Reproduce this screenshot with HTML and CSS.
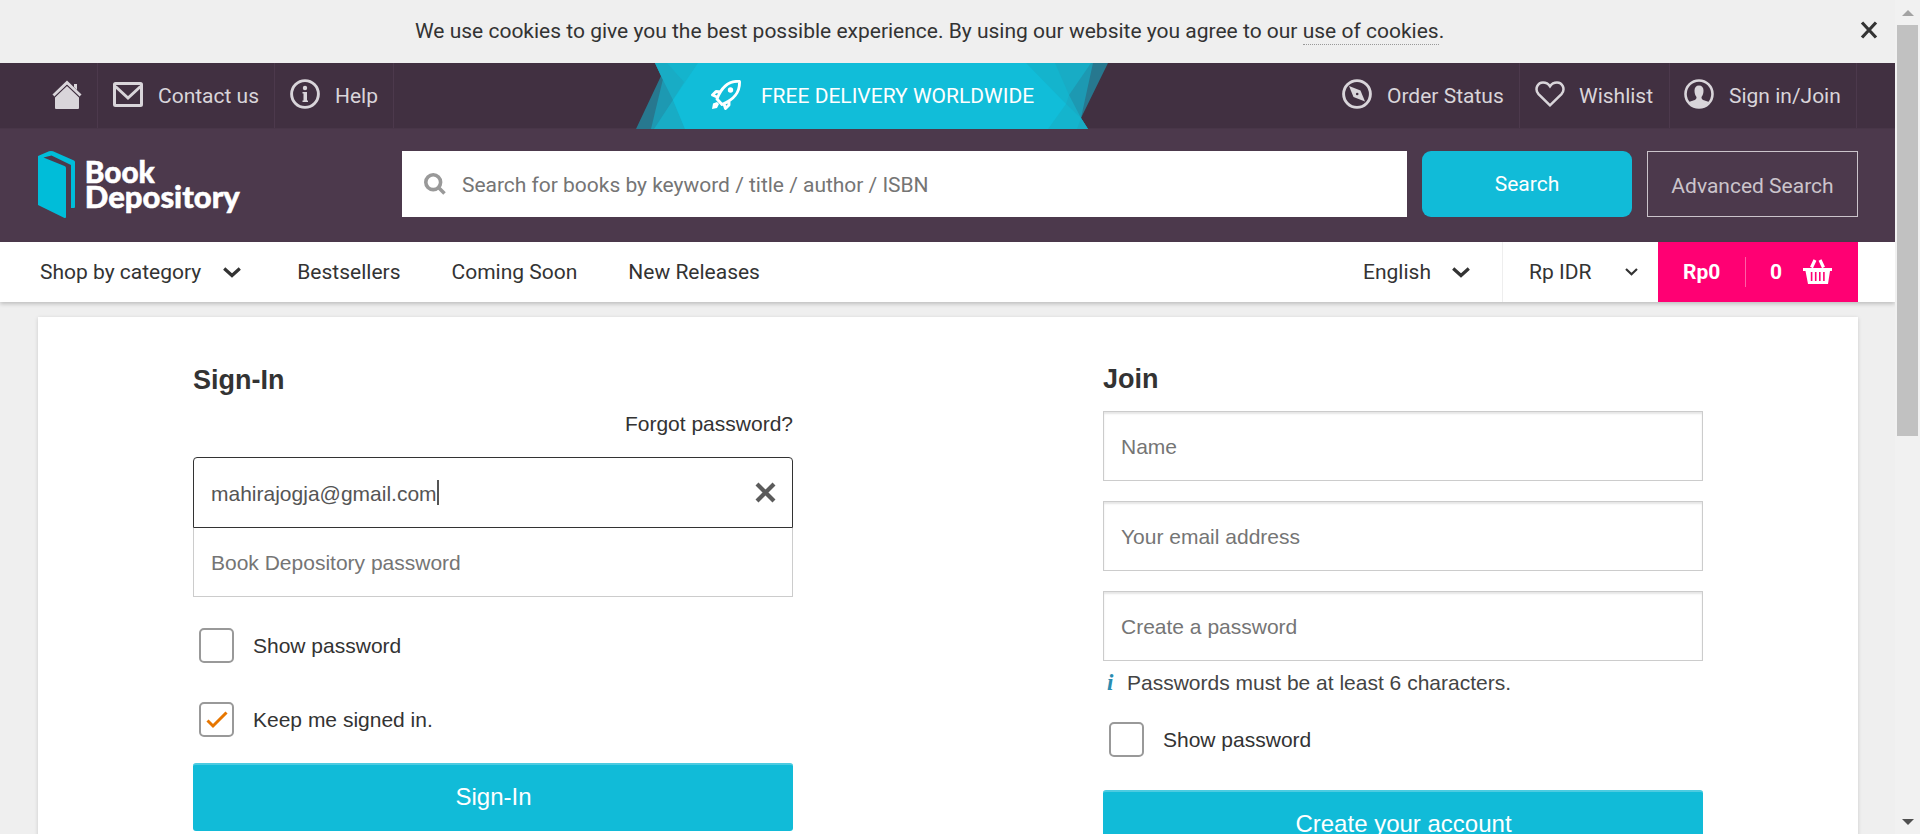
FILE: index.html
```
<!DOCTYPE html>
<html lang="en">
<head>
<meta charset="utf-8">
<title>Book Depository - Sign in</title>
<link rel="stylesheet" href="styles.css">
</head>
<body>
<div class="viewport">
<div class="page">
  <div class="cookie-bar">
    <p class="cookie-text">We use cookies to give you the best possible experience. By using our website you agree to our <a class="cookie-link">use of cookies</a>.</p>
    <svg class="cookie-close" width="18" height="18" viewBox="0 0 18 18"><path d="M2 1.500L16 16.500M16 1.500L2 16.500" stroke="#333" stroke-width="3.200"/></svg>
  </div>
  <div class="top-bar">
    <nav class="top-left">
      <a class="top-item home"><svg width="30" height="29" viewBox="0 0 30 29"><path d="M1.500 15.500L15 2.500l13.500 13" fill="none" stroke="#d9d5da" stroke-width="3"/><path d="M22 4h3v6l-3-3zM3 17.500L15 6l12 11.500V28q0 1-1 1H4q-1 0-1-1z" fill="#d9d5da"/><path d="M3 16.600L15 5.200l12 11.400" fill="none" stroke="#413041" stroke-width=".8"/></svg></a>
      <a class="top-item contact"><svg width="30" height="25" viewBox="0 0 30 25"><rect x="1.500" y="1.500" width="27" height="22" rx="1" fill="none" stroke="#d9d5da" stroke-width="3"/><path d="M2.500 4.500L15 16 27.500 4.500" fill="none" stroke="#d9d5da" stroke-width="3"/></svg><span>Contact us</span></a>
      <a class="top-item help"><svg width="30" height="30" viewBox="0 0 30 30"><circle cx="15" cy="15" r="13.400" fill="none" stroke="#d9d5da" stroke-width="2.900"/><circle cx="15" cy="9" r="2.200" fill="#d9d5da"/><path d="M12.500 13H17v8.500h1V23h-5.500v-1.500h1v-7h-1z" fill="#d9d5da"/></svg><span>Help</span></a>
    </nav>
    <div class="banner">
      <svg class="banner-shape" width="474" height="66" viewBox="0 0 474 66"><path d="M19 0H472L445 55l7 11H0L25 13z" fill="#27788f"/><path d="M19 0H457L445 55 452 66H15L27 16z" fill="#1d99b2"/><path d="M19 0H455L433 32 445 55 452 66H18L37 37 25 13z" fill="#18acc5"/><path d="M31 0H419L433 32 430 41 445 55 441 66H49L37 37 48 19z" fill="#14b4cd"/><path d="M62 0H390L430 41 412 66H49L37 37z" fill="#11bdd9"/></svg>
      <div class="banner-content"><svg width="30" height="30" viewBox="0 0 30 30"><path d="M28.500 1.500C18 .5 11 6 6 19l5 5.500C24 19 29 12 28.500 1.500zM10 12L5 11.500 1.500 15 6 17M18 20v5l-3.500 3.500L13 24" fill="none" stroke="#fff" stroke-width="2.900" stroke-linejoin="round"/><circle cx="19.500" cy="10" r="2.700" fill="#fff"/><path d="M1 29l1-5.500 4-1.500 2 2-2 4z" fill="#fff"/></svg><span>FREE DELIVERY WORLDWIDE</span></div>
    </div>
    <nav class="top-right">
      <a class="top-item order"><svg width="30" height="30" viewBox="0 0 30 30"><circle cx="15" cy="15" r="13.400" fill="none" stroke="#d9d5da" stroke-width="2.900"/><path d="M7 7L18.500 11.500 23 22.500 11.500 18z" fill="#d9d5da"/><circle cx="15.200" cy="15" r="1.300" fill="#413041"/></svg><span>Order Status</span></a>
      <a class="top-item wish"><svg width="30" height="26" viewBox="0 0 30 26"><path d="M15 24.300L3.300 12.800C-.8 7.500 3 1.500 8 1.500c3 0 5.500 1.500 7 3.800 1.500-2.300 4-3.800 7-3.800 5 0 8.800 6 4.700 11.300z" fill="none" stroke="#d9d5da" stroke-width="2.500"/></svg><span>Wishlist</span></a>
      <a class="top-item signin"><svg width="30" height="30" viewBox="0 0 30 30"><circle cx="15" cy="15" r="13.500" fill="none" stroke="#d9d5da" stroke-width="2.600"/><path d="M15 6.500c3 0 4.500 2 4.500 5s-.7 5-2 6.500c0 3 1.500 3 7.500 5C22 27 19 29 15 29s-7-2-10-6c6-2 7.500-2 7.500-5-1.300-1.500-2-3.500-2-6.500s1.500-5 4.500-5z" fill="#d9d5da"/></svg><span>Sign in/Join</span></a>
    </nav>
  </div>
  <header class="header">
    <svg class="logo" width="204" height="68" viewBox="0 0 204 68"><path d="M0 5L11 .3q2-.6 4 0L36 9.500q1 .5 1 1.500v45q0 1-1 1h-3V14L13.500 4.500 5.500 6.500 26.500 15q1.500.6 1.500 2v49q0 1.500-2 .7L0 54z" fill="#00bdd9"/><text class="logo-text" x="46.800" y="32" textLength="70" lengthAdjust="spacingAndGlyphs">Book</text><text class="logo-text" x="46.800" y="56.500" textLength="155" lengthAdjust="spacingAndGlyphs">Depository</text></svg>
    <div class="search-box"><svg width="22" height="22" viewBox="0 0 22 22"><circle cx="9.200" cy="9.200" r="7.400" fill="none" stroke="#999" stroke-width="3.600"/><path d="M14 14l6.500 6.500" stroke="#999" stroke-width="3.600"/></svg><span>Search for books by keyword / title / author / ISBN</span></div>
    <button class="search-btn">Search</button>
    <a class="advanced">Advanced Search</a>
  </header>
  <div class="nav-bar">
    <nav class="nav-left">
      <a class="category">Shop by category<svg width="18" height="11" viewBox="0 0 18 11"><path d="M1.200 1.500L9 8.500l7.800-7" fill="none" stroke="#333" stroke-width="3.200"/></svg></a>
      <a>Bestsellers</a><a>Coming Soon</a><a>New Releases</a>
    </nav>
    <div class="nav-right">
      <a class="language">English<svg width="18" height="11" viewBox="0 0 18 11"><path d="M1.200 1.500L9 8.500l7.800-7" fill="none" stroke="#333" stroke-width="3.200"/></svg></a>
      <a class="currency">Rp IDR<svg width="13" height="8" viewBox="0 0 13 8"><path d="M1 1l5.500 5.200L12 1" fill="none" stroke="#333" stroke-width="2.200"/></svg></a>
      <a class="basket"><b class="total">Rp0</b><b class="count">0</b><svg width="29" height="26" viewBox="0 0 29 26"><path d="M0 9h29v3h-2L25 25H5L2.500 12H0z" fill="#fff"/><path d="M8.500 8.500L12 1M20.500 8.500L17 1" stroke="#fff" stroke-width="3.200"/><path d="M8.600 13v9M12.700 13v9M16.800 13v9M20.900 13v9" stroke="#ff0073" stroke-width="1.600"/></svg></a>
    </div>
  </div>
  <main class="card">
    <section class="form">
      <h2 class="heading">Sign-In</h2>
      <a class="forgot">Forgot password?</a>
      <div class="field email"><span class="value">mahirajogja@gmail.com</span><svg width="21" height="21" viewBox="0 0 21 21"><path d="M2 2l17 17M19 2L2 19" stroke="#5b5b5b" stroke-width="4.200"/></svg></div>
      <div class="field password">Book Depository password</div>
      <label class="check show"><span class="box"></span>Show password</label>
      <label class="check keep"><span class="box"><svg width="22" height="18" viewBox="0 0 22 18"><path d="M1.500 9.500L7 15 20.500 1.500" fill="none" stroke="#e77600" stroke-width="3"/></svg></span>Keep me signed in.</label>
      <button class="submit">Sign-In</button>
    </section>
    <section class="form join">
      <h2 class="heading">Join</h2>
      <div class="field inset">Name</div>
      <div class="field inset">Your email address</div>
      <div class="field inset">Create a password</div>
      <p class="hint"><i class="hint-icon">i</i>Passwords must be at least 6 characters.</p>
      <label class="check join-show"><span class="box"></span>Show password</label>
      <button class="submit">Create your account</button>
    </section>
  </main>
</div>
<div class="scrollbar"><span class="arrow-up"></span><span class="thumb"></span><span class="arrow-down"></span></div>
</div>
</body>
</html>
```
FILE: styles.css
```
* { box-sizing: border-box; }
body { margin: 0; background: #efefef; font-family: Roboto, sans-serif; font-size: 21px; color: #333; overflow: hidden; }
svg { display: block; flex: none; }
h2, p { margin: 0; }
button { border: 0; padding: 0; font: inherit; color: #fff; background: #11bbd8; }
.viewport { display: flex; height: 834px; overflow: hidden; white-space: nowrap; }
.page { width: 1895px; flex: none; }
.cookie-bar { height: 63px; display: flex; align-items: center; padding: 0 17px 2px 415px; justify-content: space-between; }
.cookie-close { position: relative; top: -1px; }
.cookie-link { border-bottom: 1px dotted #999; padding-bottom: 1px; }

.top-bar { height: 66px; background: #413041; border-bottom: 1px solid #483648; display: flex; color: #d9d5da; }
.top-left, .top-right { display: flex; }
.top-item { display: flex; align-items: center; border-right: 1px solid #4c394c; padding-bottom: 3px; }
.top-item span { padding-top: 3px; }
.home { width: 98px; padding-left: 52px; }
.contact { width: 177px; padding-left: 15px; gap: 15px; }
.help { width: 119px; padding-left: 15px; gap: 15px; }
.banner { width: 474px; margin: 0 auto 0 242px; position: relative; }
.banner-shape { position: absolute; left: 0; top: 0; }
.banner-content { position: relative; display: flex; align-items: center; gap: 20px; height: 66px; padding: 0 0 3px 75px; color: #fff; }
.banner-content span { padding-top: 3px; }
.top-right { margin-right: 38px; }
.order { width: 178px; gap: 15px; }
.wish { width: 150px; padding-left: 15px; gap: 14px; }
.signin { width: 187px; padding-left: 14px; gap: 15px; }

.header { height: 113px; background: #4c394c; display: flex; padding: 22px 37px 0 38px; }
.logo { margin-right: 160px; }
.logo-text { font-family: Lato, sans-serif; font-weight: 900; font-size: 30px; fill: #fff; stroke: #fff; stroke-width: .5px; }
.search-box { width: 1005px; height: 66px; background: #fff; display: flex; align-items: center; padding-left: 22px; gap: 16px; color: #757575; margin-right: 15px; }
.search-box span { padding-top: 2px; letter-spacing: -.02px; }
.search-btn { width: 210px; height: 66px; border-radius: 9px; margin-right: 15px; }
.advanced { width: 211px; height: 66px; border: 1px solid #cbc4cb; color: #cbc4cb; display: flex; align-items: center; justify-content: center; padding-top: 3px; }

.nav-bar { height: 60px; background: #fff; box-shadow: 0 2px 4px rgba(0,0,0,.2); display: flex; justify-content: space-between; padding: 0 37px 0 40px; }
.nav-left, .nav-right, .nav-left a, .nav-right a { display: flex; align-items: center; }
.nav-left { gap: 51px; }
.category { gap: 22px; margin-right: 5px; }
.language { height: 60px; gap: 21px; width: 140px; border-right: 1px solid #eee; }
.currency { justify-content: space-between; width: 155px; padding: 0 20px 0 26px; }
.basket { width: 200px; height: 60px; background: #ff0073; color: #fff; padding-left: 25px; }
.total { width: 63px; height: 30px; line-height: 30px; border-right: 1px solid #ff5ea5; }
.count { width: 57px; padding-left: 24px; }

.card { width: 1820px; height: 900px; margin: 15px 0 0 38px; background: #fff; box-shadow: 0 1px 4px rgba(0,0,0,.15); display: flex; gap: 310px; padding-left: 155px; font-family: "Liberation Sans", Arial, sans-serif; }
.form { width: 600px; display: flex; flex-direction: column; padding-top: 45px; }
.heading { font-size: 27px; line-height: 36px; }
.forgot { align-self: flex-end; margin-top: 11px; line-height: 30px; }
.field { height: 70px; border: 1px solid #ccc; display: flex; align-items: center; padding: 2px 17px 0; color: #757575; }
.email { height: 71px; margin-top: 18px; border-color: #333; border-radius: 4px 4px 0 0; justify-content: space-between; color: #555; padding: 0 16px 0 17px; }
.value { border-right: 2px solid #555; line-height: 23px; padding-top: 2px; margin-right: auto; }
.password { border-top: 0; height: 69px; }
.check { display: flex; align-items: center; gap: 19px; padding: 0 0 0 6px; height: 35px; }
.box { width: 35px; height: 35px; border: 2px solid #999; border-radius: 5px; display: flex; align-items: center; justify-content: center; }
.show { margin-top: 31px; }
.keep { margin-top: 39px; }
.submit { height: 68px; border-radius: 3px; font-size: 24px; border-top: 2px solid #4ccbe1; margin-top: 26px; padding: 0 0 2px 1px; }
.join { padding-top: 44px; }
.join .heading { margin-bottom: 14px; }
.inset { margin-bottom: 20px; box-shadow: inset 0 2px 2px rgba(0,0,0,.1); }
.hint { margin-top: -12px; height: 24px; line-height: 24px; color: #444; padding-top: 2px; display: flex; }
.hint-icon { width: 24px; padding-left: 4px; font: italic bold 23px/24px "Liberation Serif", serif; color: #2a8cb0; }
.join-show { margin-top: 29px; }
.join .submit { margin-top: 33px; }

.scrollbar { width: 25px; background: #f1f1f1; display: flex; flex-direction: column; align-items: center; }
.arrow-up { margin-top: 10px; border: 6px solid transparent; border-top: 0; border-bottom: 6px solid #a3a3a3; }
.thumb { width: 21px; height: 411px; margin-top: 9px; background: #c1c1c1; }
.arrow-down { margin-top: auto; margin-bottom: 9px; border: 6px solid transparent; border-bottom: 0; border-top: 6px solid #505050; }
```
